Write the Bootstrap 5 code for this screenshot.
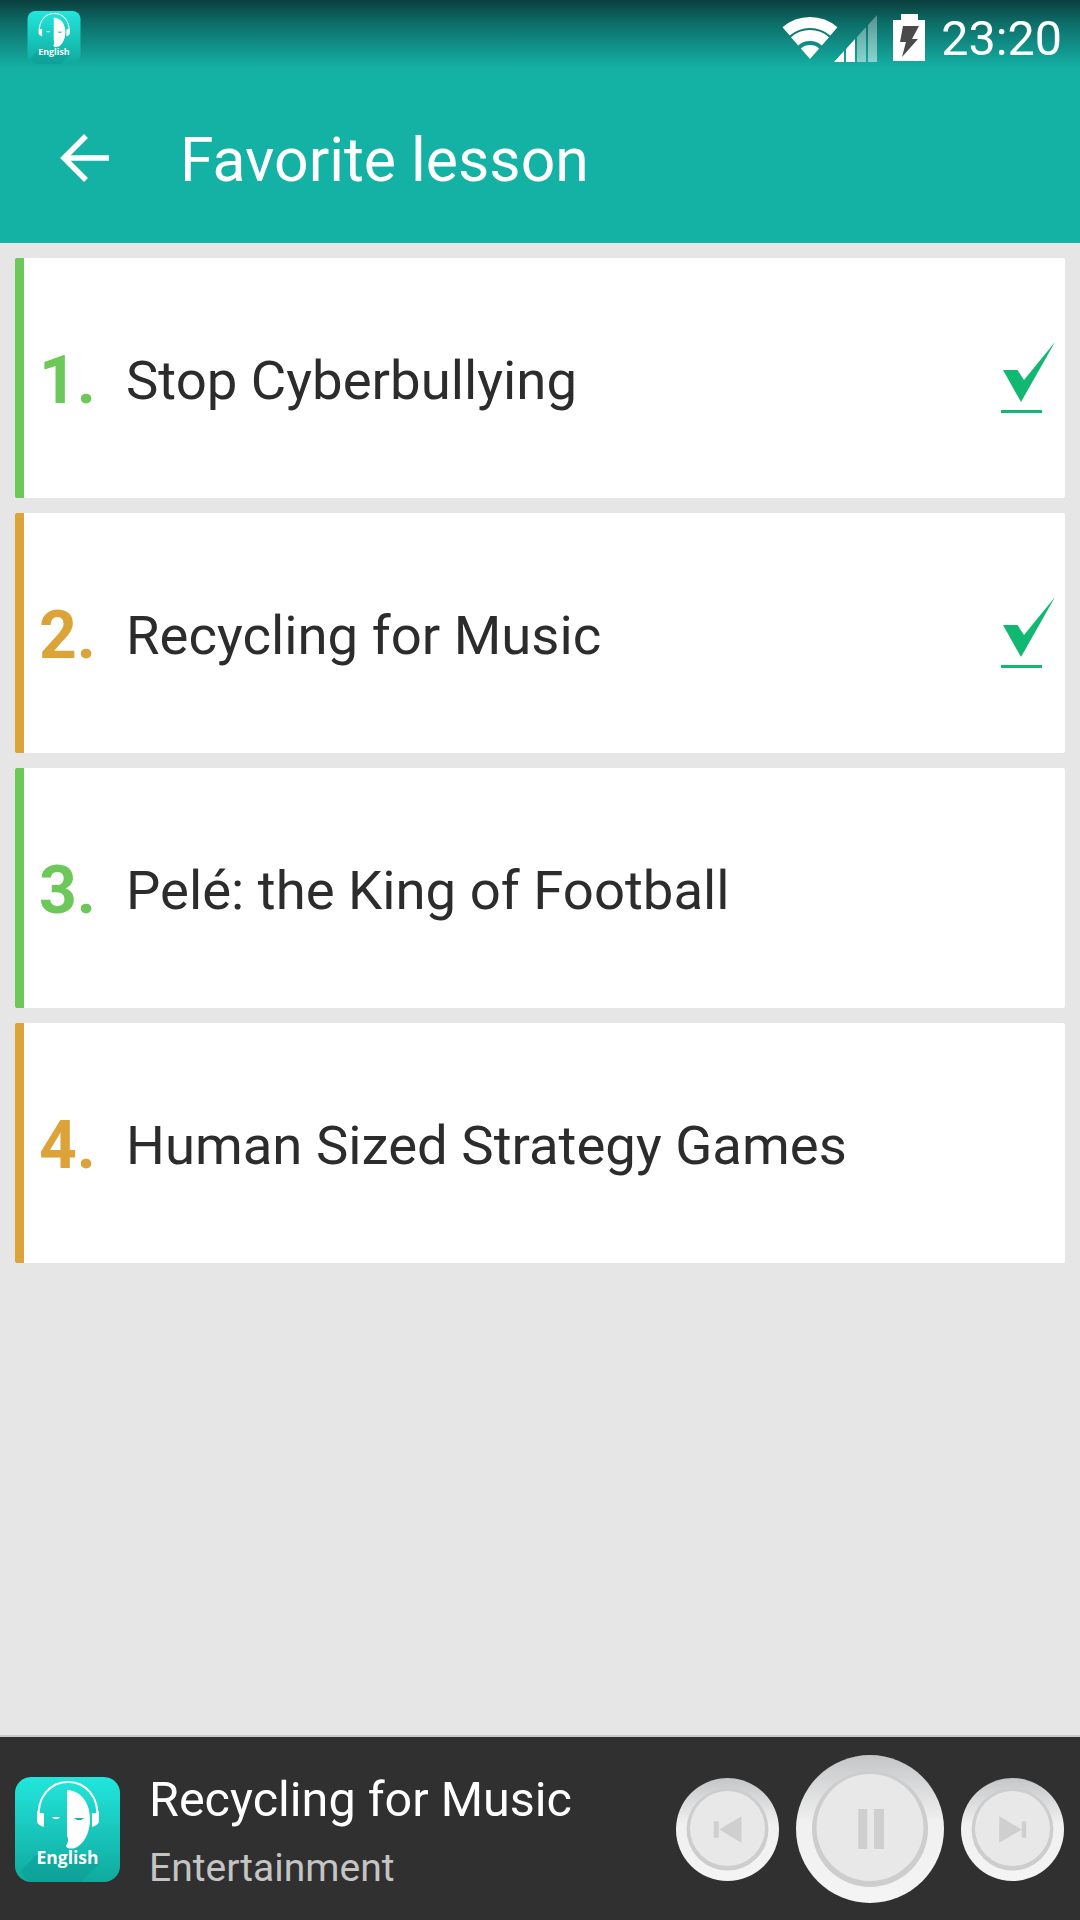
<!DOCTYPE html>
<html lang="en">
<head>
<meta charset="utf-8">
<title>Favorite lesson</title>
<link href="https://cdn.jsdelivr.net/npm/bootstrap@5.3.0/dist/css/bootstrap.min.css" rel="stylesheet">
<style>
html,body{height:100%;margin:0}
body{background:#e6e6e6;font-family:Roboto,"Liberation Sans",sans-serif;width:1080px;height:1920px;overflow:hidden}
.app-shell{height:1920px}
.app-header{height:243px;background:linear-gradient(180deg,#0a3f3e 0,#0d6f69 24px,#14b1a5 68px);color:#fff}
.status-row{height:72px;padding:11px 18px 0 27px}
.status-time{font-size:48.5px;line-height:56px;margin-left:13.5px}
.title-row{height:171px;padding-top:7px}
.back-btn{margin-left:60px;width:50px;height:50px;margin-top:-6px}
.app-title{font-size:60.7px;line-height:1;margin:0 0 0 70px;font-weight:400}
.lesson-list{padding:15px 15px 0;gap:15px}
.lesson-row{height:240px;background:#fff;border-left:9px solid;border-radius:2px}
.tone-green{border-color:#6cc858}
.tone-green .lesson-num{color:#6cc858}
.tone-amber{border-color:#dca438}
.tone-amber .lesson-num{color:#dca438}
.lesson-num{width:87px;font-size:66px;font-weight:700;text-align:center;line-height:1;margin-top:5px}
.lesson-name{font-size:54.5px;color:#2c2c2c;margin-left:15px;line-height:1;margin-top:5px}
.lesson-check{margin-left:auto;margin-right:5px;margin-top:5px}
.player-bar{height:185px;background:#303030;border-top:2px solid #c8c8c8;padding:0 16px 0 15px}
.player-art{width:105px;height:105px;flex:none;margin-top:2px}
.player-text{margin-left:29px;margin-top:35px}
.player-title{font-size:48.5px;color:#fff;line-height:56px}
.player-sub{font-size:39px;color:#c4c4c4;line-height:46px;margin-top:17px}
.player-ctrls{margin-left:auto;gap:17px;margin-top:1px}
</style>
</head>
<body>
<svg width="0" height="0" class="d-block position-absolute">
<defs>
<linearGradient id="artBg" x1="0" y1="0" x2="0" y2="1"><stop offset="0" stop-color="#22e6dc"/><stop offset="1" stop-color="#10a99e"/></linearGradient>
<linearGradient id="ringS" x1="0" y1="0" x2="0" y2="1"><stop offset="0" stop-color="#c4c6c8"/><stop offset=".45" stop-color="#f0f0f0"/><stop offset="1" stop-color="#f4f4f4"/></linearGradient>
<linearGradient id="barS" x1="0" y1="0" x2="0" y2="1"><stop offset="0" stop-color="#fff" stop-opacity=".3"/><stop offset="1" stop-color="#fff" stop-opacity=".5"/></linearGradient>
<symbol id="art" viewBox="0 0 105 105">
<rect width="105" height="105" rx="16" fill="url(#artBg)"/>
<path d="M6 94 21 78H82L84 87 66 105H18Q10 104 6 94Z" fill="#0b9a90" opacity=".45"/>
<path d="M24 44C21 19 36 5 53 5S85 19 82 44" fill="none" stroke="#fff" stroke-width="2"/>
<path d="M22 34 22 45Q23 48 29 50L29 36Q25 37 22 34ZM84 34V45Q83 48 77 50V36Q81 37 84 34Z" fill="#fff"/>
<path d="M52 13C68 14 75 28 75 42C75 57 68 68 60 71C57 72 52 72 51 69C53 66 54 62 52 59Z" fill="#fff"/>
<path d="M37 40H45L43 42H39Z" fill="#fff"/>
<path d="M59 41H69L66 43H62Z" fill="#14b1a5"/>
<text x="52.5" y="87" text-anchor="middle" font-family="Open Sans,Liberation Sans,sans-serif" font-weight="700" font-size="17.5" fill="#fff">English</text>
</symbol>
<symbol id="check" viewBox="0 0 60 80">
<path d="M3 29H17.5L24 39 55 1 21 61Z" fill="#10b872"/>
<rect x="1" y="69" width="41" height="3" fill="#10b872"/>
</symbol>
</defs>
</svg>
<div class="app-shell d-flex flex-column">
<header class="app-header">
  <div class="status-row d-flex align-items-start">
    <svg width="54" height="53"><use href="#art"/></svg>
    <div class="ms-auto d-flex align-items-center">
      <svg width="152" height="50" viewBox="775 12 152 50">
        <g fill="none" stroke="#fff" stroke-width="11">
          <path d="M785.1 29.4A36.5 36.5 0 0 1 832.9 29.4"/>
          <path d="M793.6 39.3A23.5 23.5 0 0 1 824.4 39.3"/>
        </g>
        <path d="M799.8 46.4A14 14 0 0 1 818.2 46.4L809 57Z" fill="#fff"/>
        <path d="M833 60 843 49V60ZM845 47 854 37V60H845Z" fill="#fff"/>
        <path d="M856 35 865 25V60H856ZM867 23 876 13V60H867Z" fill="url(#barS)"/>
        <path d="M892 18H900V12H917V18H924V59H892Z" fill="#fff"/>
        <path d="M902 24H918L911 37H917L901 55 905 40H899Z" fill="#4a4a4a"/>
      </svg>
      <span class="status-time">23:20</span>
    </div>
  </div>
  <div class="title-row d-flex align-items-center">
    <svg class="back-btn" viewBox="0 0 50 50"><path d="M49 25H5M26 3 4 25 26 47" fill="none" stroke="#fff" stroke-width="5.5"/></svg>
    <h1 class="app-title">Favorite lesson</h1>
  </div>
</header>
<main class="lesson-list d-flex flex-column flex-grow-1">
  <div class="lesson-row tone-green d-flex align-items-center"><span class="lesson-num">1.</span><span class="lesson-name">Stop Cyberbullying</span><svg class="lesson-check" width="60" height="80"><use href="#check"/></svg></div>
  <div class="lesson-row tone-amber d-flex align-items-center"><span class="lesson-num">2.</span><span class="lesson-name">Recycling for Music</span><svg class="lesson-check" width="60" height="80"><use href="#check"/></svg></div>
  <div class="lesson-row tone-green d-flex align-items-center"><span class="lesson-num">3.</span><span class="lesson-name">Pelé: the King of Football</span></div>
  <div class="lesson-row tone-amber d-flex align-items-center"><span class="lesson-num">4.</span><span class="lesson-name">Human Sized Strategy Games</span></div>
</main>
<footer class="player-bar d-flex align-items-center">
  <svg class="player-art"><use href="#art"/></svg>
  <div class="player-text align-self-start">
    <div class="player-title">Recycling for Music</div>
    <div class="player-sub">Entertainment</div>
  </div>
  <div class="player-ctrls d-flex align-items-center">
    <svg width="103" height="103" viewBox="0 0 103 103"><circle cx="51.5" cy="51.5" r="51.5" fill="url(#ringS)"/><circle cx="51.5" cy="51.5" r="41" fill="#cdcdcd"/><circle cx="51.5" cy="50.5" r="37.5" fill="#e9e8e9"/><path d="M37.8 43.2H42.8V59.8H37.8ZM43.2 51.5 65.5 38.2V64.8Z" fill="#cfcfcf"/></svg>
    <svg width="148" height="148" viewBox="0 0 148 148"><circle cx="74" cy="74" r="74" fill="url(#ringS)"/><circle cx="74" cy="74" r="58" fill="#cdcdcd"/><circle cx="74" cy="72.5" r="53.5" fill="#e9e8e9"/><path d="M62.3 54H71.3V94H62.3ZM78 54H88V94H78Z" fill="#cfcfcf"/></svg>
    <svg width="103" height="103" viewBox="0 0 103 103"><circle cx="51.5" cy="51.5" r="51.5" fill="url(#ringS)"/><circle cx="51.5" cy="51.5" r="41" fill="#cdcdcd"/><circle cx="51.5" cy="50.5" r="37.5" fill="#e9e8e9"/><path d="M60.8 43.2H65.2V59.8H60.8ZM60.8 51.5 38.2 38.2V64.8Z" fill="#cfcfcf"/></svg>
  </div>
</footer>
</div>
<script src="https://cdn.jsdelivr.net/npm/bootstrap@5.3.0/dist/js/bootstrap.bundle.min.js"></script>
</body>
</html>
